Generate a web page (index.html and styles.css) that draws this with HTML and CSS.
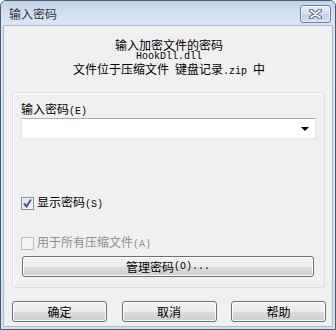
FILE: index.html
```html
<!DOCTYPE html>
<html>
<head>
<meta charset="utf-8">
<link rel="stylesheet" href="styles.css">
</head>
<body>
<div class="window">
  <div class="titlebar">
    <span class="title">输入密码</span>
    <div class="close">
      <svg width="13" height="10" viewBox="0 0 13 10">
        <path d="M2 1.5 L11 8.5 M11 1.5 L2 8.5" stroke="#5f6a7a" stroke-width="4" stroke-linecap="round" fill="none"/>
        <path d="M2 1.5 L11 8.5 M11 1.5 L2 8.5" stroke="#f4f6f9" stroke-width="2" stroke-linecap="round" fill="none"/>
      </svg>
    </div>
  </div>
  <div class="client">
    <div class="header">
      <div>输入加密文件的密码</div>
      <div class="mono">HookDll.dll</div>
      <div>文件位于压缩文件<span class="mono"> </span>键盘记录<span class="mono">.zip </span>中</div>
    </div>
    <div class="group">
      <div class="label">输入密码<span class="mono">(E)</span></div>
      <div class="combo"><span class="arrow"></span></div>
      <div class="check-row first">
        <span class="cb checked">
          <svg width="11" height="11" viewBox="0 0 11 11"><path d="M2 5.5 L4.5 8.5 L9 1.5" stroke="#3b5aa6" stroke-width="2" fill="none"/></svg>
        </span>
        <span>显示密码<span class="mono">(S)</span></span>
      </div>
      <div class="check-row second disabled">
        <span class="cb"></span>
        <span>用于所有压缩文件<span class="mono">(A)</span></span>
      </div>
      <div class="btn manage">管理密码<span class="mono">(O)...</span></div>
    </div>
    <div class="buttons">
      <div class="btn">确定</div>
      <div class="btn">取消</div>
      <div class="btn">帮助</div>
    </div>
  </div>
</div>
</body>
</html>
```
FILE: styles.css
```css
html, body {
  margin: 0;
  padding: 0;
  background: #ffffff;
}
body {
  font-family: "Noto Sans CJK SC", "DejaVu Sans", sans-serif;
  font-size: 12px;
  line-height: 12px;
  color: #000;
}
.mono {
  font-family: "Liberation Mono", "DejaVu Sans Mono", monospace;
  font-size: 10px;
}
.window {
  width: 336px;
  height: 330px;
  box-sizing: border-box;
  border: 1px solid #4d5a6b;
  border-radius: 6px 6px 0 0;
  background: linear-gradient(#c6d6ea, #d9e5f3 40px, #d4e1f1);
  padding: 0 2px 2px 2px;
  display: flex;
  flex-direction: column;
}
.titlebar {
  height: 24px;
  display: flex;
  align-items: center;
  justify-content: space-between;
  padding-left: 6px;
  padding-right: 2px;
  background: linear-gradient(#c3d3e8, #d6e2f1 60%, #dce7f4);
  margin: 0 -2px;
  padding-left: 8px;
  padding-right: 4px;
  border-radius: 5px 5px 0 0;
}
.title {
  color: #2e3540;
  font-size: 12px;
  margin-top: 2px;
}
.close {
  width: 29px;
  height: 16px;
  border: 1px solid #6f7e93;
  border-radius: 3px;
  background: linear-gradient(#e6edf6, #d3deec 50%, #c4d2e4 51%, #d4e0ee);
  box-shadow: inset 0 0 0 1px rgba(255,255,255,0.5);
  display: flex;
  align-items: center;
  justify-content: center;
  margin-top: 2px;
}
.client {
  flex: 1;
  background: #f0f0f0;
  border: 1px solid #a9bad0;
  display: flex;
  flex-direction: column;
  padding: 0 6px 0 8px;
}
.header {
  padding-top: 13px;
  text-align: center;
  line-height: 12px;
}
.group {
  margin-top: 14px;
  width: 313px;
  height: 196px;
  box-sizing: border-box;
  border: 1px solid #d5dfe5;
  border-radius: 3px;
  box-shadow: inset 1px 1px 0 #ffffff;
  padding: 10px 8px 0 8px;
  display: flex;
  flex-direction: column;
}
.label {
  height: 12px;
}
.combo {
  margin-top: 3px;
  width: 295px;
  height: 21px;
  box-sizing: border-box;
  background: #fff;
  border: 1px solid #e2e3ea;
  border-top-color: #abadb3;
  border-bottom-color: #e3e9ef;
  position: relative;
  display: flex;
  align-items: center;
  justify-content: flex-end;
  padding-right: 6px;
}
.arrow {
  width: 0;
  height: 0;
  border-left: 4px solid transparent;
  border-right: 4px solid transparent;
  border-top: 4px solid #000;
}
.check-row {
  display: flex;
  align-items: center;
  gap: 3px;
  height: 13px;
}
.check-row.first {
  margin-top: 58px;
}
.check-row.second {
  margin-top: 27px;
}
.cb {
  width: 13px;
  height: 13px;
  box-sizing: border-box;
  border: 1px solid #8e8f8f;
  background: linear-gradient(135deg, #dcdcdc, #fbfbfb);
  box-shadow: inset 0 0 0 1px #f4f4f4;
  display: flex;
  align-items: center;
  justify-content: center;
}
.disabled {
  color: #8d8d8d;
}
.disabled .cb {
  border-color: #bcbcbc;
  background: #f4f4f4;
}
.btn {
  height: 21px;
  box-sizing: border-box;
  border: 1px solid #707070;
  border-radius: 3px;
  background: linear-gradient(#f2f2f2, #ebebeb 50%, #dddddd 51%, #cfcfcf);
  box-shadow: inset 0 0 0 1px #fcfcfc;
  display: flex;
  align-items: center;
  justify-content: center;
}
.manage {
  margin-top: 6px;
  margin-left: 1px;
  width: 292px;
}
.buttons {
  margin-top: 13px;
  width: 314px;
  display: flex;
  justify-content: space-between;
}
.buttons .btn {
  width: 95px;
}
```
